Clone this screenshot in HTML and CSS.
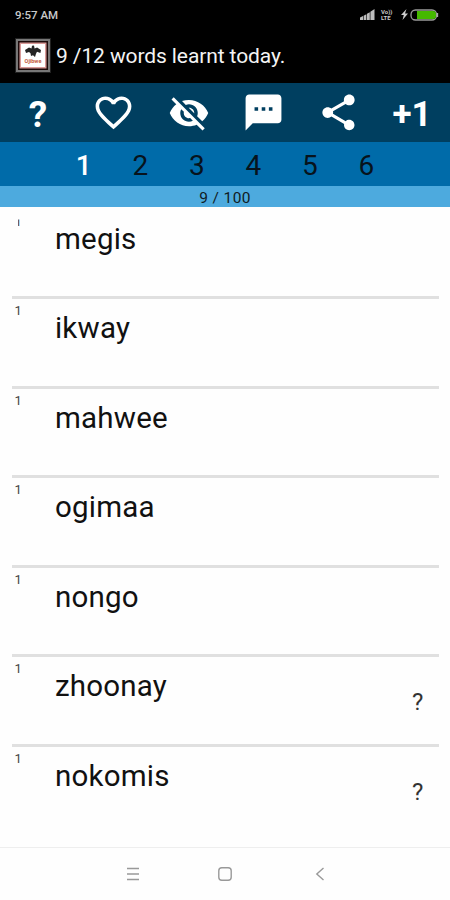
FILE: index.html
```html
<!DOCTYPE html>
<html lang="en">
<head>
<meta charset="utf-8">
<meta name="viewport" content="width=device-width, initial-scale=1">
<title>Words</title>
<link rel="stylesheet" href="styles.css">
</head>
<body>
<div class="status">
  <span class="time">9:57 AM</span>
  <div class="indicators">
    <svg class="signal" width="15" height="11" viewBox="0 0 15 11" fill="#bdbdbd"><path d="M0 8.5L3 7v4H0zM3.6 6.7L6.4 5.2V11H3.6zM7 4.8L9.8 3.2V11H7zM10.4 2.8L14.5 0v11h-4.100z"/></svg>
    <span class="volte"><span>Vo))</span><span>LTE</span></span>
    <svg class="bolt" width="7" height="11" viewBox="0 0 7 11" fill="#ccc"><path d="M5.500 0L0 6h2.800L1.500 11L7 4.500H4z"/></svg>
    <svg class="battery" width="29" height="12" viewBox="0 0 29 12"><rect x="1" y="1" width="25.500" height="10" rx="4.500" fill="#000" stroke="#9a9a9a" stroke-width="1.300"/><path d="M7 2h16a3 3 0 0 1 3 3v2a3 3 0 0 1-3 3H7z" fill="#45b800"/><path d="M27.500 4v4" stroke="#aaa" stroke-width="1.300"/></svg>
  </div>
</div>
<header class="title">
  <div class="logo">
    <svg width="20" height="13" viewBox="0 0 20 13" fill="#252525"><path d="M2 5L6 2.500l2.500 1L9 .8l2-.3.600 3 2.500-1L18 5l-.6 3-3.400-1.200-1 2L12 12l-2-1.800L8 11l-.5-2.800L6 7 3 8z"/></svg>
    <span>Ojibwe</span>
  </div>
  <h1>9 /12 words learnt today.</h1>
</header>
<div class="toolbar">
  <span class="help">?</span>
  <svg class="icon" viewBox="0 0 24 24"><path d="M16.500 3c-1.740 0-3.410.81-4.500 2.090C10.910 3.810 9.240 3 7.500 3 4.420 3 2 5.420 2 8.500c0 3.780 3.400 6.860 8.550 11.540L12 21.350l1.450-1.320C18.600 15.360 22 12.280 22 8.500 22 5.420 19.580 3 16.500 3zm-4.400 15.550l-.1.100-.1-.1C7.140 14.240 4 11.390 4 8.500 4 6.500 5.500 5 7.500 5c1.540 0 3.040.99 3.570 2.360h1.870C13.460 5.990 14.960 5 16.500 5c2 0 3.500 1.500 3.500 3.500 0 2.890-3.140 5.740-7.900 10.050z"/></svg>
  <svg class="icon eye" viewBox="0 0 24 24"><path d="M12 7c2.760 0 5 2.240 5 5 0 .65-.13 1.260-.36 1.830l2.920 2.920c1.510-1.260 2.700-2.890 3.430-4.750-1.730-4.390-6-7.500-11-7.500-1.400 0-2.740.25-3.980.7l2.160 2.160C10.740 7.130 11.350 7 12 7zM2 4.270l2.280 2.280.46.460C3.080 8.300 1.780 10.020 1 12c1.730 4.390 6 7.500 11 7.500 1.550 0 3.030-.3 4.380-.84l.42.420L19.730 22 21 20.730 3.270 3 2 4.270zM7.530 9.800l1.550 1.550c-.05.210-.08.430-.08.650 0 1.660 1.340 3 3 3 .22 0 .44-.03.650-.08l1.550 1.550c-.67.330-1.410.53-2.200.53-2.760 0-5-2.240-5-5 0-.79.200-1.530.530-2.200zm4.310-.78l3.150 3.150.020-.16c0-1.660-1.340-3-3-3l-.17.010z"/></svg>
  <svg class="icon" viewBox="0 0 24 24"><path d="M20 2H4c-1.100 0-1.990.9-1.990 2L2 22l4-4h14c1.100 0 2-.9 2-2V4c0-1.100-.9-2-2-2z"/><path class="dots" d="M7 9h2v2H7zM11 9h2v2h-2zM15 9h2v2h-2z"/></svg>
  <svg class="icon" viewBox="0 0 24 24"><path d="M18 16.080c-.76 0-1.440.3-1.960.77L8.910 12.700c.05-.23.090-.46.090-.7s-.04-.47-.09-.7l7.050-4.110c.54.500 1.250.81 2.040.81 1.660 0 3-1.340 3-3s-1.340-3-3-3-3 1.340-3 3c0 .24.040.47.090.7L8.040 9.810C7.500 9.310 6.790 9 6 9c-1.660 0-3 1.340-3 3s1.340 3 3 3c.79 0 1.500-.31 2.040-.81l7.120 4.160c-.05.210-.08.430-.08.650 0 1.610 1.310 2.920 2.920 2.920s2.920-1.310 2.920-2.920-1.310-2.920-2.920-2.920z"/></svg>
  <span class="plus">+1</span>
</div>
<nav class="levels"><span class="active">1</span><span>2</span><span>3</span><span>4</span><span>5</span><span>6</span></nav>
<div class="progress">9 / 100</div>
<main class="words">
  <div class="row"><span class="count clipped">1</span><span class="word">megis</span></div>
  <div class="row"><span class="count">1</span><span class="word">ikway</span></div>
  <div class="row"><span class="count">1</span><span class="word">mahwee</span></div>
  <div class="row"><span class="count">1</span><span class="word">ogimaa</span></div>
  <div class="row"><span class="count">1</span><span class="word">nongo</span></div>
  <div class="row"><span class="count">1</span><span class="word">zhoonay</span><span class="hint">?</span></div>
  <div class="row"><span class="count">1</span><span class="word">nokomis</span><span class="hint">?</span></div>
</main>
<footer class="navbar">
  <svg width="14" height="16" viewBox="0 0 14 16"><path d="M1 2.500h12M1 8h12M1 13.500h12"/></svg>
  <svg width="16" height="16" viewBox="0 0 16 16"><rect x="1.800" y="1.800" width="12.400" height="12.400" rx="3"/></svg>
  <svg width="10" height="16" viewBox="0 0 10 16"><path d="M8.500 2L1.800 8l6.700 6"/></svg>
</footer>
</body>
</html>
```
FILE: styles.css
```css
* { box-sizing: border-box; }
body {
  margin: 0;
  width: 450px;
  height: 900px;
  overflow: hidden;
  display: flex;
  flex-direction: column;
  background: #fefefe;
  color: #111;
  font-family: Roboto, sans-serif;
}
.status {
  height: 30px;
  flex: none;
  display: flex;
  justify-content: space-between;
  padding: 0 11px 0 15px;
  background: #000;
  color: #c9c9c9;
}
.time { font-size: 11.500px; line-height: 30px; font-weight: 500; letter-spacing: 0; }
.indicators { display: flex; align-items: center; height: 29px; }
.volte { display: flex; flex-direction: column; width: 12px; margin: 0 8px 0 6px; font-size: 6px; line-height: 6px; font-weight: 700; }
.battery { margin-left: 2px; }
.title { height: 53px; flex: none; display: flex; background: #000; padding: 9px 0 0 16px; }
.logo {
  width: 34px;
  height: 33px;
  border: 2px solid #777;
  outline: 1px solid #222;
  background: #fff;
  box-shadow: inset 0 0 0 1.500px #1c0a0a, inset 0 0 0 3px #d99a98;
  display: flex;
  flex-direction: column;
  align-items: center;
  padding-top: 4px;
}
.logo span { font-size: 5.500px; line-height: 7px; font-weight: 700; color: #c45a3c; }
.title h1 { margin: 0 0 0 6px; font-size: 21px; line-height: 34px; font-weight: 400; letter-spacing: -0.1px; color: #f4f4f4; }
.toolbar {
  height: 59px;
  flex: none;
  display: grid;
  grid-template-columns: repeat(6, 1fr);
  place-items: center;
  background: #003f60;
  color: #fff;
}
.icon { width: 43px; height: 43px; margin: 0 0 2px 1px; fill: #fff; }
.eye { width: 42px; height: 42px; margin-left: 2px; }
.dots { fill: #003f60; }
.help { font-size: 37px; line-height: 57px; font-weight: 700; padding: 2px 0 0 1px; }
.plus { font-size: 35px; line-height: 59px; font-weight: 700; padding: 2px 1px 0 0; }
.levels {
  height: 44px;
  flex: none;
  display: grid;
  grid-template-columns: repeat(6, 56.500px);
  justify-content: center;
  text-align: center;
  background: #006ba9;
  color: #07131c;
  font-size: 28px;
  line-height: 48px;
}
.levels .active { color: #fff; font-weight: 500; }
.progress { height: 21px; flex: none; background: #4daade; text-align: center; font-size: 15.500px; line-height: 24px; letter-spacing: 0.400px; color: #101c24; }
.words { flex: 1; min-height: 0; padding: 2.500px 11px 0 12px; }
.row { display: grid; grid-template-columns: 43px 1fr 27px; height: 89.600px; border-bottom: 3px solid #e0e0e0; }
.row:last-child { border-bottom: 0; }
.count { padding-left: 2.500px; font-size: 13px; line-height: 24px; color: #444; }
.clipped { clip-path: inset(10px 0 0 6px); }
.word { font-size: 29.500px; line-height: 59px; letter-spacing: 0.200px; }
.hint { font-size: 24px; line-height: 28px; padding-top: 31px; color: #333; }
.navbar { height: 53px; flex: none; border-top: 1px solid #eee; display: flex; align-items: center; padding-left: 126px; }
.navbar svg { fill: none; stroke: #999; stroke-width: 1.400; }
.navbar svg + svg { margin-left: 77px; }
.navbar svg:last-child { margin-left: 82px; }
```
